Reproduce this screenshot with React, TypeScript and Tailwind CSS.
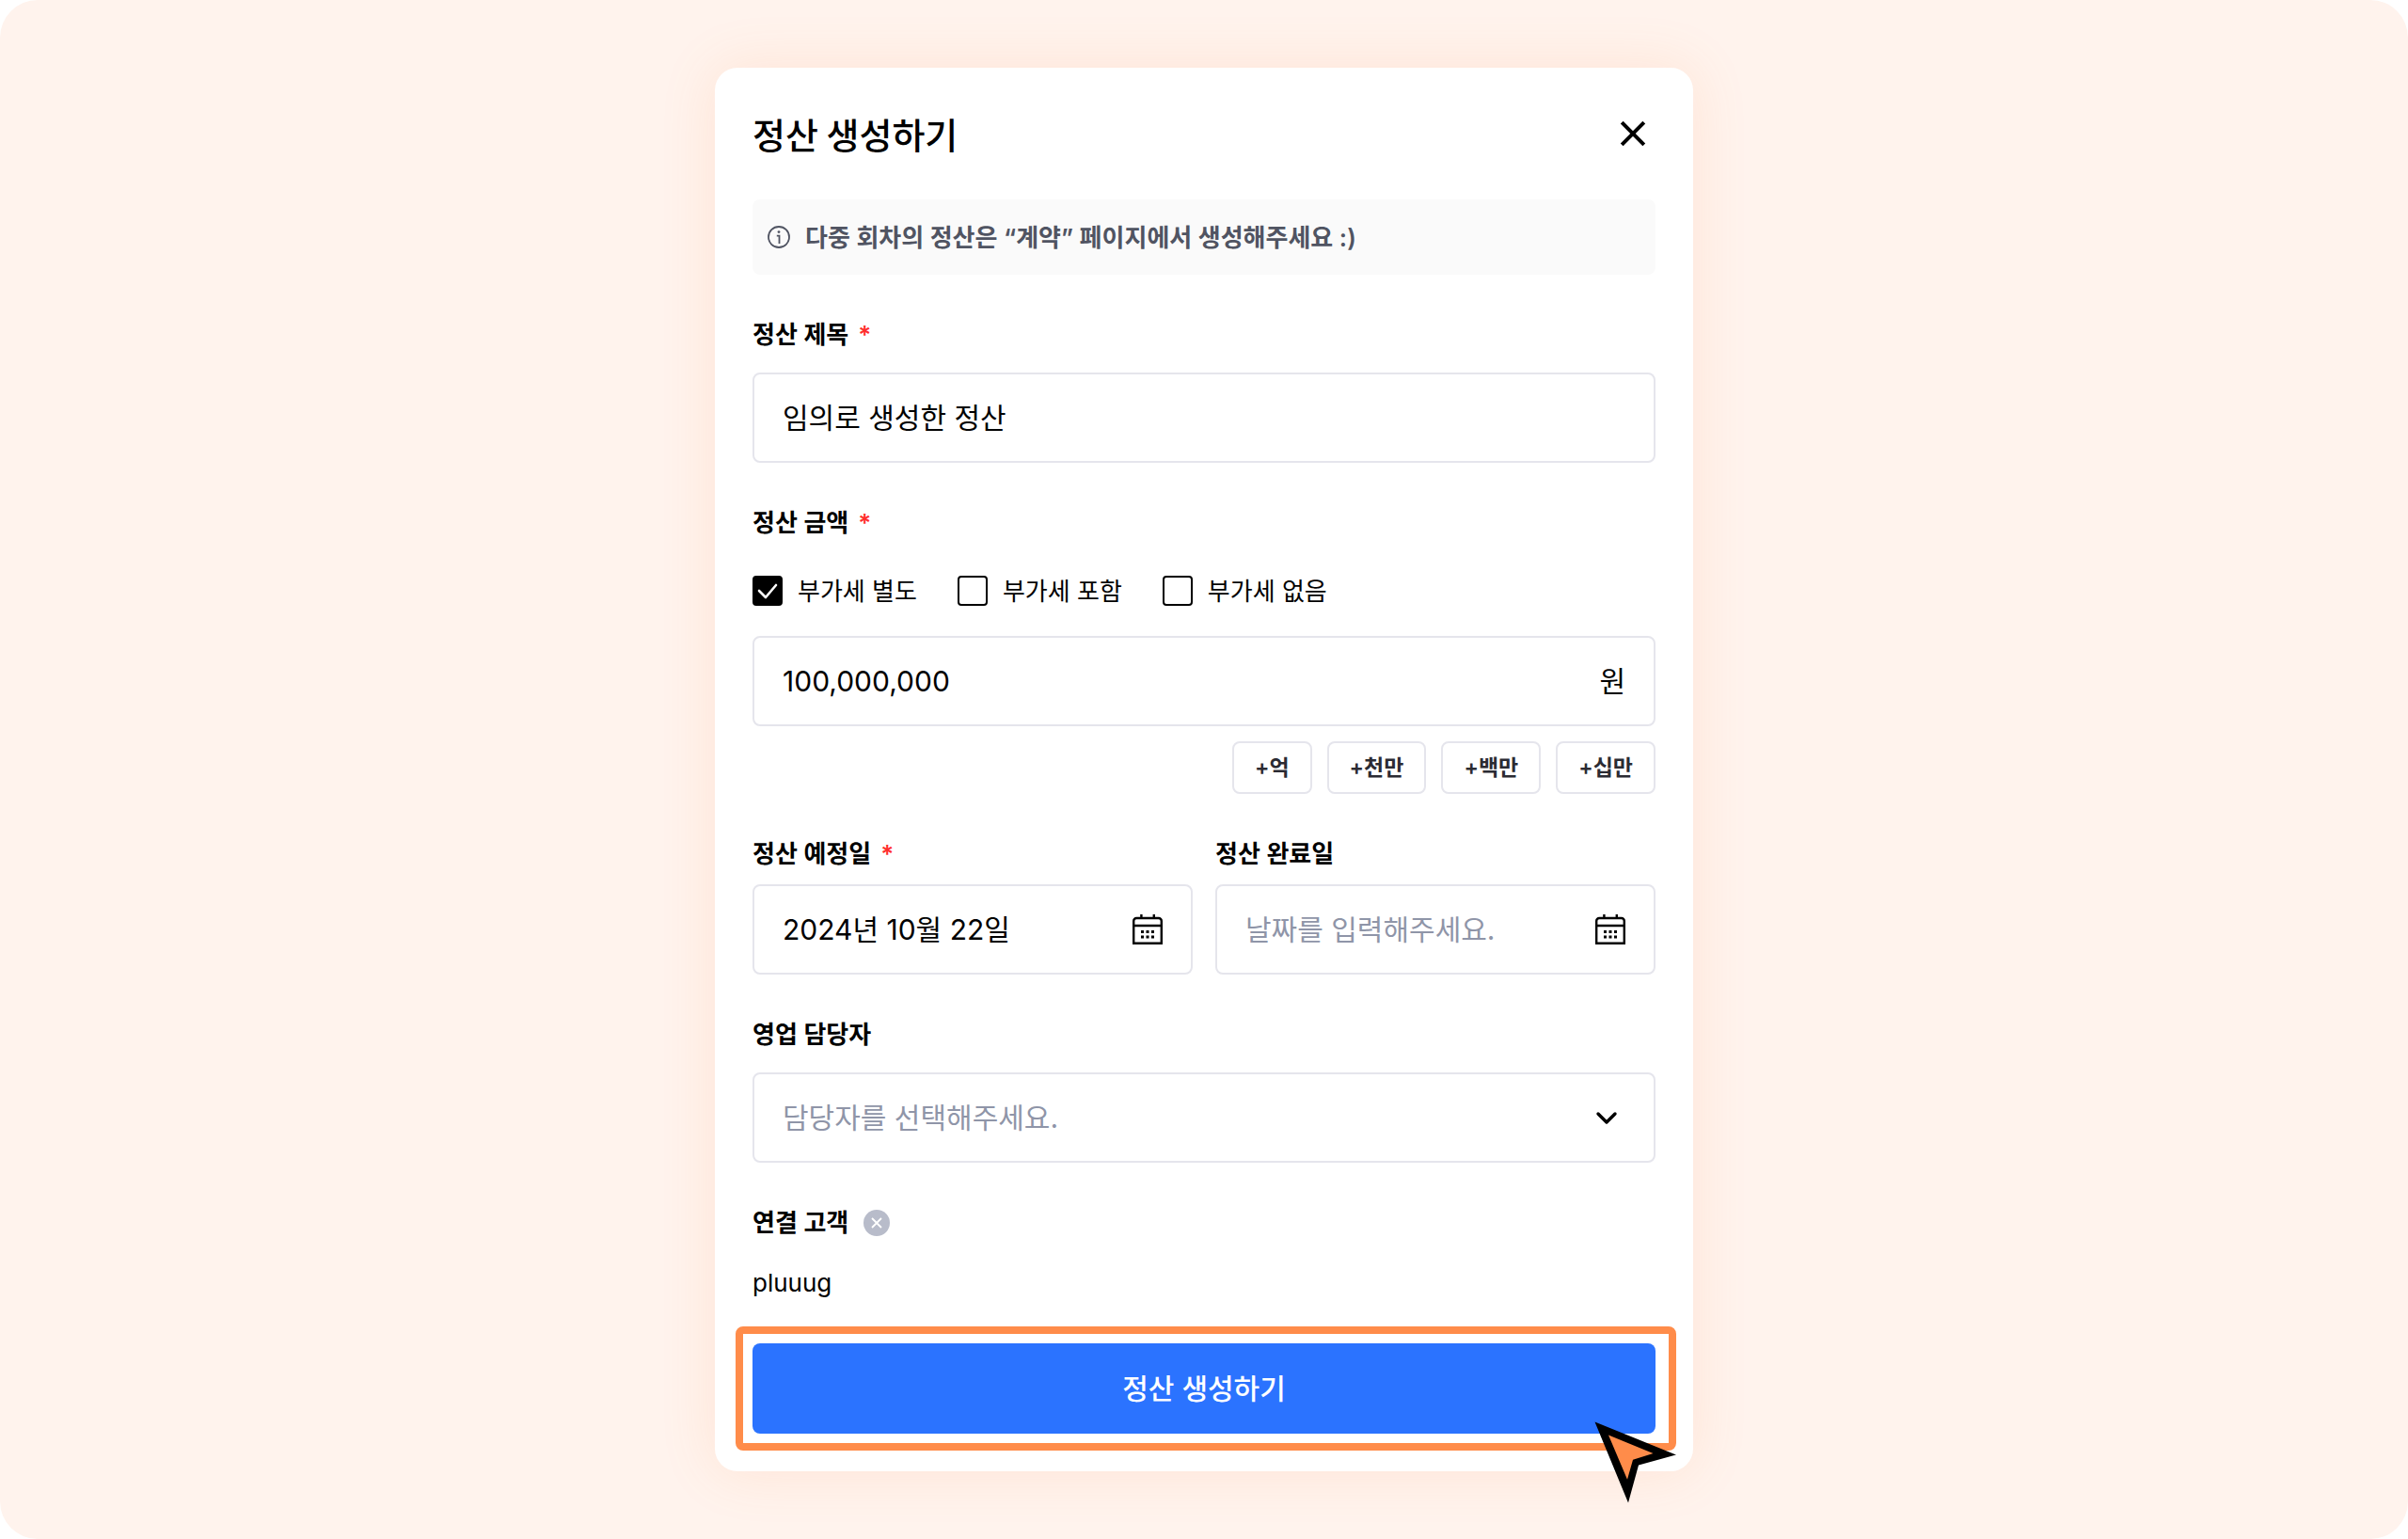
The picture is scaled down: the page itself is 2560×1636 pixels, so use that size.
import { useState } from 'react'
import type { ReactNode } from 'react'

const VAT_OPTIONS = ['부가세 별도', '부가세 포함', '부가세 없음']
const QUICK_AMOUNTS = ['+억', '+천만', '+백만', '+십만']

function CloseIcon() {
  return (
    <svg width="48" height="48" viewBox="0 0 48 48" fill="none" stroke="currentColor" strokeWidth="4">
      <path d="M12.2 12.2 35.8 35.8M35.8 12.2 12.2 35.8" />
    </svg>
  )
}

function InfoIcon() {
  return (
    <svg width="24" height="24" viewBox="0 0 24 24" fill="none" stroke="currentColor" strokeWidth="1.8">
      <circle cx="12" cy="12" r="11" />
      <path d="M9.8 10.7h2.7V19" />
      <circle cx="12" cy="6.6" r="1.4" fill="currentColor" stroke="none" />
    </svg>
  )
}

function CalendarIcon() {
  return (
    <svg width="32" height="32" viewBox="0 0 32 32" fill="none">
      <path d="M1.2 30.8V7a3 3 0 0 1 3-3h23.6a3 3 0 0 1 3 3v23.8z" stroke="#000" strokeWidth="2.4" />
      <path d="M1 12h30M9.4 0v4M22.8 0v4" stroke="#000" strokeWidth="2.4" />
      <path
        d="M9 17h3v3H9zM14.5 17h3v3h-3zM20 17h3v3h-3zM9 22.5h3v3H9zM14.5 22.5h3v3h-3zM20 22.5h3v3h-3z"
        fill="#000"
      />
    </svg>
  )
}

function ChevronIcon() {
  return (
    <svg
      width="24"
      height="24"
      viewBox="0 0 24 24"
      fill="none"
      stroke="#000"
      strokeWidth="3.4"
      strokeLinecap="round"
      strokeLinejoin="round"
    >
      <path d="m3 8 9 9 9-9" />
    </svg>
  )
}

function CursorIcon() {
  return (
    <svg width="88" height="88" viewBox="0 0 88 88">
      <path d="M0.5 0.5 87 35.5 47 46.5 36 86.5z" fill="#000" />
      <path d="m15 14.5 47.5 19.5-21.5 6.7-6 21z" fill="#ff8c4a" />
    </svg>
  )
}

interface LabelProps {
  htmlFor?: string
  required?: boolean
  children: ReactNode
}

function Label({ htmlFor, required, children }: LabelProps) {
  return (
    <label htmlFor={htmlFor} className="flex items-center gap-2.5 text-[26px] leading-10 font-semibold">
      {children}
      {required && <span className="text-[#ff2e2e]">*</span>}
    </label>
  )
}

function FieldBox({ children }: { children: ReactNode }) {
  return (
    <div className="flex h-24 items-center rounded-lg border-2 border-[#e5e5ec] bg-white px-[30px]">
      {children}
    </div>
  )
}

interface TextInputProps {
  id: string
  value?: string
  placeholder?: string
}

function TextInput({ id, value, placeholder }: TextInputProps) {
  return (
    <input
      id={id}
      type="text"
      defaultValue={value}
      placeholder={placeholder}
      className="min-w-0 flex-1 bg-transparent text-[30px] leading-12 outline-none placeholder:text-[#8f95a8]"
    />
  )
}

function DateField({ label, required, ...input }: TextInputProps & { label: string; required?: boolean }) {
  return (
    <div className="flex min-w-0 flex-col gap-3">
      <Label htmlFor={input.id} required={required}>
        {label}
      </Label>
      <FieldBox>
        <TextInput {...input} />
        <button type="button" aria-label="달력 열기">
          <CalendarIcon />
        </button>
      </FieldBox>
    </div>
  )
}

export default function App() {
  const [vat, setVat] = useState(VAT_OPTIONS[0])

  return (
    <div className="bg-white font-[Inter,'Noto_Sans_CJK_KR',sans-serif] text-black">
      <main className="flex min-h-screen items-center justify-center rounded-[40px] bg-[#fff3ed] py-[72px]">
        <form className="w-full max-w-[1040px] rounded-3xl bg-white p-10 shadow-[0_0_60px_rgba(255,140,74,0.14)]">
          <header className="flex h-15 items-center justify-between">
            <h1 className="font-['Noto_Sans_CJK_KR',sans-serif] text-[38px] leading-15 font-medium">
              정산 생성하기
            </h1>
            <button type="button" aria-label="닫기">
              <CloseIcon />
            </button>
          </header>

          <p className="mt-10 flex h-20 items-center gap-4 rounded-lg bg-[#fafafa] px-4 text-[26px] font-semibold text-[#505462]">
            <InfoIcon />
            다중 회차의 정산은 “계약” 페이지에서 생성해주세요 :)
          </p>

          <div className="mt-11 flex flex-col gap-11">
            <div className="flex flex-col gap-5">
              <Label htmlFor="title" required>
                정산 제목
              </Label>
              <FieldBox>
                <TextInput id="title" value="임의로 생성한 정산" />
              </FieldBox>
            </div>

            <div className="flex flex-col">
              <Label htmlFor="amount" required>
                정산 금액
              </Label>
              <div className="mt-9 flex gap-[43px]">
                {VAT_OPTIONS.map((option) => (
                  <label key={option} className="flex h-8 items-center gap-4 text-[26px]">
                    <span className="grid size-8 place-items-center">
                      <input
                        type="checkbox"
                        checked={vat === option}
                        onChange={() => setVat(option)}
                        className="col-start-1 row-start-1 size-8 appearance-none rounded border-2 border-black bg-white checked:bg-black"
                      />
                      {vat === option && (
                        <svg
                          viewBox="0 0 32 32"
                          fill="none"
                          stroke="#fff"
                          strokeWidth="2.6"
                          strokeLinecap="round"
                          strokeLinejoin="round"
                          className="pointer-events-none col-start-1 row-start-1 size-8"
                        >
                          <path d="m7 16 7 7L25 10" />
                        </svg>
                      )}
                    </span>
                    {option}
                  </label>
                ))}
              </div>
              <div className="mt-8">
                <FieldBox>
                  <TextInput id="amount" value="100,000,000" />
                  <span className="text-[30px]">원</span>
                </FieldBox>
              </div>
              <div className="mt-4 flex justify-end gap-4">
                {QUICK_AMOUNTS.map((amount) => (
                  <button
                    key={amount}
                    type="button"
                    className="h-14 rounded-lg border-2 border-[#e5e5ec] px-[22px] text-[23px] font-semibold text-[#2b2b33]"
                  >
                    {amount}
                  </button>
                ))}
              </div>
            </div>

            <div className="grid grid-cols-2 gap-6">
              <DateField id="due-date" label="정산 예정일" required value="2024년 10월 22일" />
              <DateField id="done-date" label="정산 완료일" placeholder="날짜를 입력해주세요." />
            </div>

            <div className="flex flex-col gap-5">
              <Label htmlFor="manager">영업 담당자</Label>
              <div className="grid items-center">
                <select
                  id="manager"
                  className="col-start-1 row-start-1 h-24 w-full appearance-none rounded-lg border-2 border-[#e5e5ec] bg-white px-[30px] text-[30px] text-[#8f95a8]"
                >
                  <option>담당자를 선택해주세요.</option>
                </select>
                <span className="pointer-events-none col-start-1 row-start-1 mr-10 justify-self-end">
                  <ChevronIcon />
                </span>
              </div>
            </div>

            <div className="flex flex-col gap-6">
              <div className="flex items-center gap-4">
                <h2 className="text-[26px] leading-10 font-semibold">연결 고객</h2>
                <button type="button" aria-label="연결 고객 삭제">
                  <svg width="28" height="28" viewBox="0 0 28 28" fill="none">
                    <circle cx="14" cy="14" r="14" fill="#b8bcca" />
                    <path d="m9 9 10 10M19 9 9 19" stroke="#fff" strokeWidth="1.8" />
                  </svg>
                </button>
              </div>
              <p className="text-[26px] leading-10">pluuug</p>
            </div>

            <div className="relative">
              <button
                type="submit"
                className="h-24 w-full rounded-lg bg-[#2b73ff] text-[30px] font-medium text-white"
              >
                정산 생성하기
              </button>
              {/* highlight frame and pointer around the submit button */}
              <div className="pointer-events-none absolute -top-[18px] -right-[22px] -bottom-[18px] -left-[18px] rounded-lg border-8 border-[#ff8c4a]" />
              <div className="pointer-events-none absolute top-[83px] -right-[23px]">
                <CursorIcon />
              </div>
            </div>
          </div>
        </form>
      </main>
    </div>
  )
}
